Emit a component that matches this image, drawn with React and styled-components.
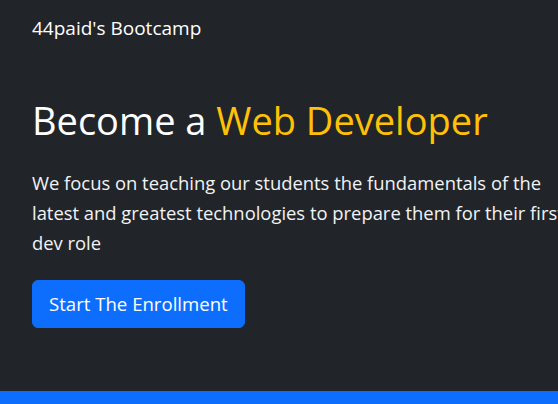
import React from "react";
import styled, { createGlobalStyle } from "styled-components";

const Global = createGlobalStyle`
  html, body { margin: 0; padding: 0; }
  body {
    background: #212529;
    font-family: "Open Sans", "Noto Sans", sans-serif;
    overflow: hidden;
  }
`;

const Page = styled.div`
  width: 558px;
  height: 404px;
  display: flex;
  flex-direction: column;
  background: #212529;
  color: #fff;
`;

const Navbar = styled.nav`
  display: flex;
  align-items: center;
  padding: 8px 32px;
`;

const Brand = styled.span`
  font-size: 19px;
  line-height: 30px;
  padding: 5px 0;
  color: #fff;
`;

const Hero = styled.section`
  flex: 1;
  padding: 40px 32px 0;
  display: flex;
  flex-direction: column;
  align-items: flex-start;
`;

const Title = styled.h1`
  margin: 0 0 24px;
  font-size: 38px;
  font-weight: 400;
  line-height: 48px;
  white-space: nowrap;
`;

const Accent = styled.span`
  color: #ffc107;
`;

const Lead = styled.p`
  margin: 0 0 22px;
  font-size: 18.4px;
  font-weight: 400;
  line-height: 30px;
  color: #f1f3f5;
  white-space: nowrap;
`;

const Button = styled.button`
  font-family: inherit;
  font-size: 18.6px;
  line-height: 30px;
  padding: 8px 16px;
  color: #fff;
  background: #0d6efd;
  border: 1px solid #0d6efd;
  border-radius: 6px;
  cursor: pointer;
`;

const Footer = styled.div`
  height: 13px;
  background: #0d6efd;
`;

export default function App() {
  return (
    <>
      <Global />
      <Page>
        <Navbar>
          <Brand>44paid's Bootcamp</Brand>
        </Navbar>
        <Hero>
          <Title>
            Become a <Accent>Web Developer</Accent>
          </Title>
          <Lead>
            We focus on teaching our students the fundamentals of the
            <br />
            latest and greatest technologies to prepare them for their first
            <br />
            dev role
          </Lead>
          <Button>Start The Enrollment</Button>
        </Hero>
        <Footer />
      </Page>
    </>
  );
}
